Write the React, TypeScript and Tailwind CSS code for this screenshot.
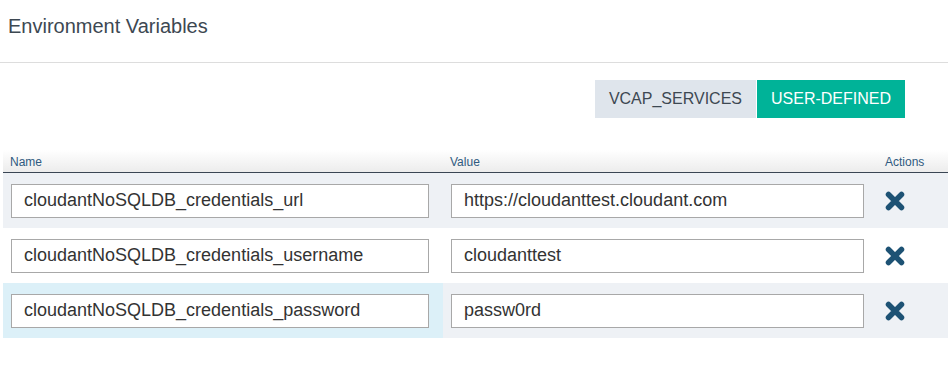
import { useState } from 'react'

type EnvVar = {
  name: string
  value: string
}

const initialVars: EnvVar[] = [
  { name: 'cloudantNoSQLDB_credentials_url', value: 'https://cloudanttest.cloudant.com' },
  { name: 'cloudantNoSQLDB_credentials_username', value: 'cloudanttest' },
  { name: 'cloudantNoSQLDB_credentials_password', value: 'passw0rd' },
]

function RemoveIcon() {
  return (
    <svg width="20" height="20" viewBox="0 0 20 20" aria-hidden="true">
      <path
        d="M3.5 3.5 L16.5 16.5 M16.5 3.5 L3.5 16.5"
        stroke="#1d5274"
        strokeWidth="5.5"
        strokeLinecap="round"
      />
    </svg>
  )
}

export default function App() {
  const [mode, setMode] = useState<'vcap' | 'user'>('user')
  const [vars, setVars] = useState<EnvVar[]>(initialVars)

  const update = (i: number, key: keyof EnvVar, v: string) => {
    setVars(prev => prev.map((row, idx) => (idx === i ? { ...row, [key]: v } : row)))
  }

  return (
    <div className="w-[948px] h-[379px] bg-white font-['Liberation_Sans',Arial,sans-serif] text-[#333]">
      <div className="h-[63px] border-b border-[#dddddd] pl-2 pt-3">
        <h1 className="text-[20px] leading-[28px] text-[#3d4852]">Environment Variables</h1>
      </div>

      <div className="flex justify-end gap-px pr-[43px] mt-[17px]">
        <button
          onClick={() => setMode('vcap')}
          className={
            mode === 'vcap'
              ? 'h-[38px] px-[14px] bg-[#00b398] text-white text-[16px]'
              : 'h-[38px] px-[14px] bg-[#dfe5ec] text-[#3d4852] text-[16px]'
          }
        >
          VCAP_SERVICES
        </button>
        <button
          onClick={() => setMode('user')}
          className={
            mode === 'user'
              ? 'h-[38px] px-[14px] bg-[#00b398] text-white text-[16px]'
              : 'h-[38px] px-[14px] bg-[#dfe5ec] text-[#3d4852] text-[16px]'
          }
        >
          USER-DEFINED
        </button>
      </div>

      <div className="ml-[3px] mt-8">
        <div className="grid grid-cols-[440px_435px_1fr] h-[23px] border-b border-[#3a4654] bg-gradient-to-b from-white to-[#ececec] text-[12px] text-[#2f5a80]">
          <div className="flex items-center pl-[7px] pt-px">Name</div>
          <div className="flex items-center pl-[7px] pt-px">Value</div>
          <div className="flex items-center pl-[7px] pt-px">Actions</div>
        </div>

        {vars.map((row, i) => (
          <div
            key={i}
            className={
              i % 2 === 0
                ? 'grid grid-cols-[440px_435px_1fr] h-[55px] bg-[#eef1f5]'
                : 'grid grid-cols-[440px_435px_1fr] h-[55px] bg-white'
            }
          >
            <div
              className={
                i === 2
                  ? 'flex items-center pl-2 pr-[14px] bg-[#dcf0f8]'
                  : 'flex items-center pl-2 pr-[14px]'
              }
            >
              <input
                value={row.name}
                onChange={e => update(i, 'name', e.target.value)}
                className="w-full h-[34px] border border-[#a8a8a8] bg-white pl-3 text-[18px] text-[#333] outline-none"
              />
            </div>
            <div className="flex items-center pl-2 pr-[14px]">
              <input
                value={row.value}
                onChange={e => update(i, 'value', e.target.value)}
                className="w-full h-[34px] border border-[#a8a8a8] bg-white pl-3 text-[18px] text-[#333] outline-none"
              />
            </div>
            <div className="flex items-center pl-[7px]">
              <button
                onClick={() => setVars(prev => prev.filter((_, idx) => idx !== i))}
                className="flex items-center justify-center"
              >
                <RemoveIcon />
              </button>
            </div>
          </div>
        ))}
      </div>
    </div>
  )
}
